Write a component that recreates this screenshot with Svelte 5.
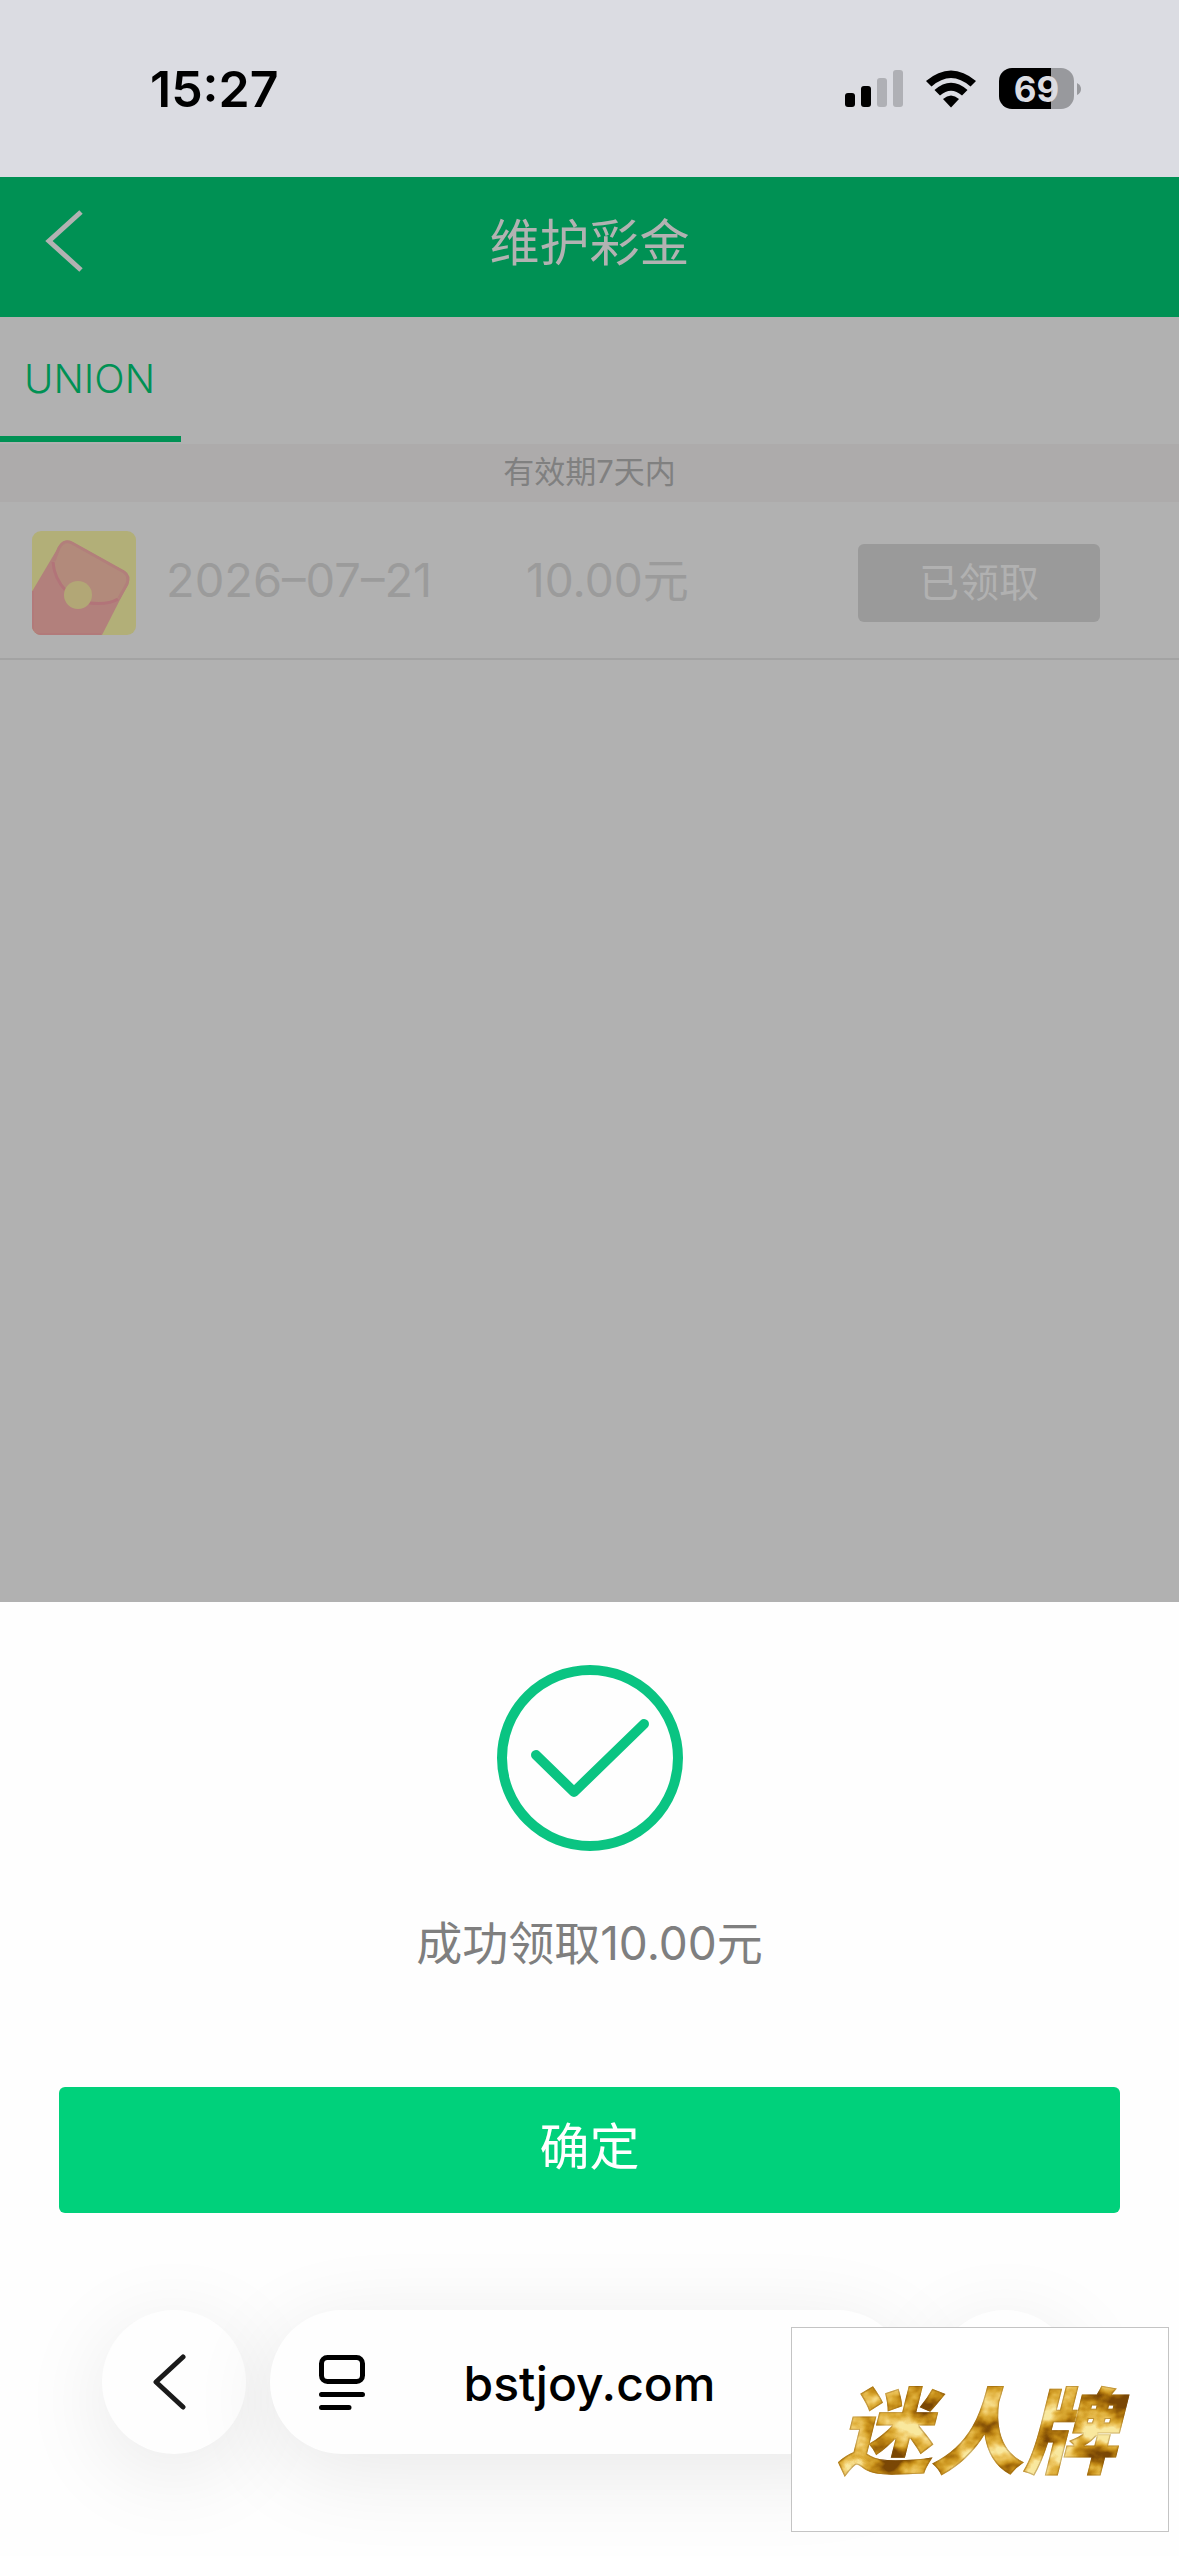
<script>
  const bonuses = [{ date: '2026–07–21', amount: '10.00元', status: '已领取' }];
  let address = $state('bstjoy.com');
</script>

<div class="screen">
  <div class="status">
    <span class="time">15:27</span>
    <div class="indicators">
      <svg class="signal" viewBox="0 0 58 38" aria-hidden="true">
        <rect x="0" y="23" width="10" height="14" rx="3" />
        <rect x="16" y="16" width="10" height="21" rx="3" />
        <rect class="dim" x="32" y="8" width="10" height="29" rx="3" />
        <rect class="dim" x="48" y="0" width="10" height="37" rx="3" />
      </svg>
      <svg class="wifi" viewBox="0 0 52 38" aria-hidden="true">
        <path d="M1 11 Q26 -10 51 11 L45.500 16.500 Q26 -0.500 6.500 16.500Z" />
        <path d="M9.500 20 Q26 5.500 42.500 20 L37 25.500 Q26 16 15 25.500Z" />
        <path d="M18 29 Q26 22 34 29 L26 37.500Z" />
      </svg>
      <div class="power">
        <div class="battery">69</div>
        <svg class="nub" viewBox="0 0 4 12" aria-hidden="true"><path d="M0 0 Q4 2 4 6 T0 12Z" /></svg>
      </div>
    </div>
  </div>

  <header class="header">
    <button class="back" aria-label="返回">
      <svg viewBox="0 0 38 62" aria-hidden="true"><path d="M36 2 L4 31 L36 60" /></svg>
    </button>
    <h1>维护彩金</h1>
  </header>

  <main class="content">
    <nav class="tabs"><button class="tab">UNION</button></nav>
    <p class="notice">有效期7天内</p>
    <ul class="list">
      {#each bonuses as bonus}
        <li class="row">
          <svg class="packet" viewBox="0 0 104 104" aria-hidden="true">
            <defs>
              <clipPath id="tile"><rect width="104" height="104" rx="9" /></clipPath>
            </defs>
            <g clip-path="url(#tile)">
              <rect width="104" height="104" fill="#b2af78" />
              <path d="M-2 64 L27 15 Q32 7 40 11 L92 40 Q99 45 96 53 L69 106 H-2Z" fill="#b2807c" />
              <path d="M22 30 L27 15 Q32 7 40 11 L92 40 Q99 45 96 53 L87 67 Q78 73 56 71 L34 58 Q23 46 22 30Z" fill="#b28a7b" />
              <path d="M22 30 L27 17 Q32 8 40 12 L92 41 Q98 45 95 53 L87 67" fill="none" stroke="#b27f7b" stroke-width="3" />
              <path d="M21 31 Q22 47 34 60 M57 72 Q77 74 86 68" fill="none" stroke="#b27479" stroke-width="3" />
              <path d="M1 60 V103 H69" fill="none" stroke="#b27a7a" stroke-width="2" />
              <circle cx="46" cy="64" r="14" fill="#b2a776" />
            </g>
          </svg>
          <span class="date">{bonus.date}</span>
          <span class="amount">{bonus.amount}</span>
          <button class="claimed">{bonus.status}</button>
        </li>
      {/each}
    </ul>
  </main>

  <section class="sheet" role="dialog" aria-label="领取结果">
    <svg class="check" viewBox="0 0 186 186" aria-hidden="true">
      <circle cx="93" cy="93" r="88" />
      <path d="M39 90 L77 127 L147 59" />
    </svg>
    <p class="message">成功领取10.00元</p>
    <button class="confirm">确定</button>
  </section>

  <footer class="browser">
    <button class="round" aria-label="后退">
      <svg class="prev" viewBox="0 0 34 56" aria-hidden="true"><path d="M31 3 L4 28 L31 53" /></svg>
    </button>
    <div class="address">
      <button class="reader" aria-label="页面菜单">
        <svg viewBox="0 0 46 56" aria-hidden="true">
          <rect x="2.500" y="2.500" width="41" height="24" rx="6" />
          <path d="M2.500 39.500 H43.500 M2.500 52.500 H30" />
        </svg>
      </button>
      <input type="text" aria-label="网址" bind:value={address} />
    </div>
    <button class="round" aria-label="更多"></button>
  </footer>

  <aside class="brand">
    <svg viewBox="0 0 378 205" aria-hidden="true">
      <defs>
        <filter id="gold" x="0" y="0" width="1" height="1" color-interpolation-filters="sRGB">
          <feTurbulence type="fractalNoise" baseFrequency="0.026 0.034" numOctaves="4" seed="11" result="noise" />
          <feColorMatrix in="noise" values="2.2 0 0 0 -0.5  2.2 0 0 0 -0.5  2.2 0 0 0 -0.5  0 0 0 0 1" />
          <feComponentTransfer result="foil">
            <feFuncR type="table" tableValues="0.48 0.64 0.78 0.87 0.94 0.98" />
            <feFuncG type="table" tableValues="0.28 0.42 0.56 0.68 0.79 0.91" />
            <feFuncB type="table" tableValues="0.02 0.04 0.10 0.22 0.40 0.62" />
          </feComponentTransfer>
          <feComposite in="foil" in2="SourceAlpha" operator="in" result="face" />
          <feMorphology in="SourceAlpha" operator="erode" radius="1" result="inner" />
          <feComposite in="SourceAlpha" in2="inner" operator="out" result="rim" />
          <feFlood flood-color="#7a4a06" flood-opacity="0.35" />
          <feComposite in2="rim" operator="in" result="edge" />
          <feMerge>
            <feMergeNode in="face" />
            <feMergeNode in="edge" />
          </feMerge>
        </filter>
      </defs>
      <g filter="url(#gold)">
        <rect width="378" height="205" fill="none" />
        <text x="186" y="139" text-anchor="middle">迷人牌</text>
      </g>
    </svg>
  </aside>
</div>

<style>
  :global(body) {
    background: #fefefe;
  }
  .screen {
    position: relative;
    display: flex;
    flex-direction: column;
    min-height: 100vh;
    font-family: Inter, 'Noto Sans CJK SC', sans-serif;
    font-weight: 400;
    background: #fefefe;
    overflow: hidden;
  }
  button,
  input {
    border: 0;
    padding: 0;
    margin: 0;
    background: none;
    font: inherit;
    color: inherit;
  }
  h1,
  p,
  ul {
    margin: 0;
    padding: 0;
    font-weight: inherit;
  }
  svg {
    display: block;
  }

  .status {
    display: flex;
    align-items: center;
    justify-content: space-between;
    height: 177px;
    padding: 0 98px 0 150px;
    box-sizing: border-box;
    background: #dbdce2;
    color: #000;
  }
  .time {
    font-size: 50px;
    font-weight: 600;
    line-height: 60px;
  }
  .indicators {
    display: flex;
    align-items: center;
    gap: 22px;
  }
  .signal {
    width: 58px;
    height: 38px;
  }
  .dim {
    fill: #afb0b5;
  }
  .wifi {
    width: 52px;
    height: 38px;
  }
  .power {
    display: flex;
    align-items: center;
    gap: 3px;
  }
  .battery {
    width: 75px;
    height: 41px;
    border-radius: 13px;
    background: linear-gradient(to right, #000 69%, #98999d 69%);
    color: #dbdce2;
    font-size: 35px;
    font-weight: 700;
    line-height: 42px;
    text-align: center;
  }
  .nub {
    width: 4px;
    height: 12px;
    fill: #98999d;
  }

  .header {
    display: grid;
    grid-template-columns: 140px 1fr 140px;
    align-items: center;
    height: 140px;
    background: #009154;
    color: #b2b2b2;
  }
  .back {
    height: 100%;
    padding: 0 0 12px 45px;
  }
  .back svg {
    width: 38px;
    height: 62px;
    fill: none;
    stroke: #b2b2b2;
    stroke-width: 5;
  }
  .header h1 {
    font-size: 50px;
    line-height: 60px;
    padding-bottom: 8px;
    text-align: center;
  }

  .content {
    flex: 1;
    background: #b1b1b1;
  }
  .tabs {
    display: flex;
    height: 127px;
  }
  .tab {
    width: 181px;
    height: 125px;
    box-sizing: border-box;
    padding: 4px 0 0 24px;
    border-bottom: 6px solid #009154;
    color: #009154;
    font-size: 40px;
    font-weight: 300;
    text-align: left;
  }
  .notice {
    padding-bottom: 2px;
    background: #adabab;
    color: #808080;
    font-size: 31px;
    line-height: 56px;
    text-align: center;
  }
  .list {
    list-style: none;
  }
  .row {
    display: flex;
    align-items: center;
    height: 158px;
    padding: 6px 79px 0 32px;
    box-sizing: border-box;
    border-bottom: 2px solid #a3a3a3;
    color: #9b9b9b;
    font-size: 46px;
    line-height: 60px;
  }
  .packet {
    width: 104px;
    height: 104px;
    margin-right: 30px;
  }
  .date,
  .amount {
    padding-bottom: 6px;
    white-space: nowrap;
  }
  .date {
    flex: 0 0 360px;
    font-size: 47px;
  }
  .amount {
    flex: 1;
  }
  .claimed {
    width: 242px;
    height: 78px;
    border-radius: 6px;
    background: #9a9a9a;
    color: #b1b1b1;
    font-size: 40px;
  }

  .sheet {
    display: flex;
    flex-direction: column;
    align-items: center;
    padding: 63px 59px 97px;
  }
  .check {
    width: 186px;
    height: 186px;
    fill: none;
    stroke: #0ac482;
    stroke-width: 10;
    stroke-linecap: round;
    stroke-linejoin: round;
  }
  .message {
    margin: 56px 0 108px;
    color: #7f7f7f;
    font-size: 46px;
    line-height: 72px;
  }
  .confirm {
    width: 100%;
    height: 126px;
    padding-bottom: 6px;
    border-radius: 6px;
    background: #00d17b;
    color: #fff;
    font-size: 50px;
    line-height: 60px;
  }

  .browser {
    display: flex;
    gap: 24px;
    padding: 0 102px 102px;
  }
  .round,
  .address {
    height: 144px;
    border-radius: 72px;
    background: #fefefe;
    box-shadow: 0 18px 90px rgba(0, 0, 0, 0.09);
  }
  .round {
    display: grid;
    place-items: center;
    flex: 0 0 144px;
  }
  .prev {
    width: 34px;
    height: 56px;
    margin-right: 10px;
    fill: none;
    stroke: #1a1a1a;
    stroke-width: 5;
    stroke-linecap: round;
    stroke-linejoin: round;
  }
  .address {
    flex: 1;
    min-width: 0;
    display: grid;
    grid-template-columns: 46px 1fr 46px;
    align-items: center;
    box-sizing: border-box;
    padding: 2px 49px 0;
  }
  .reader svg {
    width: 46px;
    height: 56px;
    fill: none;
    stroke: #000;
    stroke-width: 5;
    stroke-linecap: round;
  }
  .address input {
    min-width: 0;
    width: 100%;
    color: #000;
    font-size: 48px;
    font-weight: 500;
    text-align: center;
  }

  .brand {
    position: absolute;
    right: 10px;
    bottom: 24px;
    width: 378px;
    height: 205px;
    box-sizing: border-box;
    border: 1px solid #c4c4c4;
    background: #fff;
  }
  .brand svg {
    width: 100%;
    height: 100%;
  }
  .brand text {
    font-family: 'Noto Sans CJK SC', sans-serif;
    font-size: 94px;
    font-weight: 900;
    font-style: italic;
    fill: #c98a1a;
    stroke: #c98a1a;
    stroke-width: 1;
  }
</style>
